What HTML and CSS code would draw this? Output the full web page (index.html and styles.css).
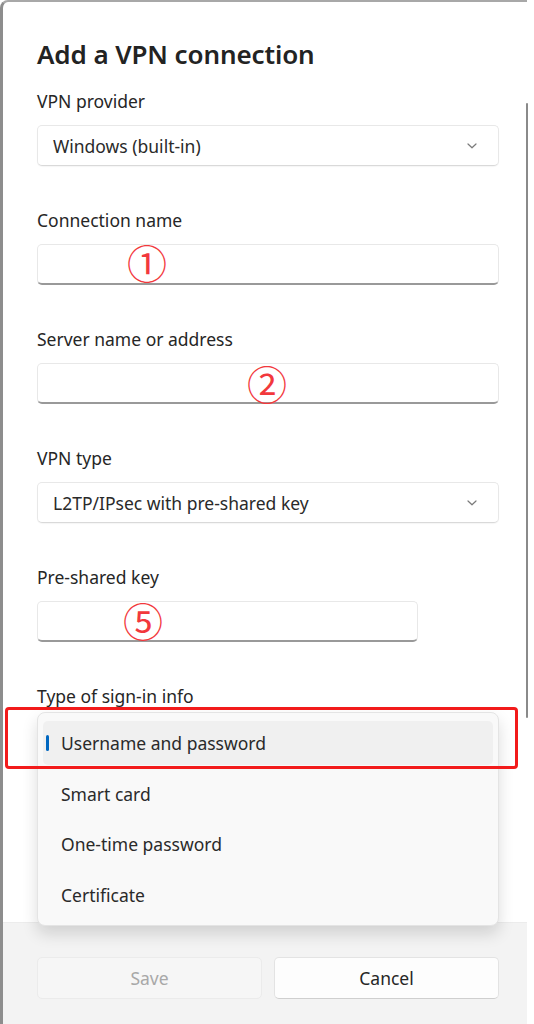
FILE: index.html
```html
<!DOCTYPE html>
<html lang="en">
<head>
<meta charset="utf-8">
<title>Add a VPN connection</title>
<link rel="stylesheet" href="styles.css">
</head>
<body>
<div class="window">
  <div class="scrollbar"></div>
  <main class="content">
    <h1 class="title">Add a VPN connection</h1>

    <div class="field">
      <div class="label">VPN provider</div>
      <div class="select">
        <span>Windows (built-in)</span>
        <svg class="chev" width="12" height="8" viewBox="0 0 12 8"><path d="M2 2 L6 5.8 L10 2" fill="none" stroke="#7a7a7a" stroke-width="1.2" stroke-linecap="round" stroke-linejoin="round"/></svg>
      </div>
    </div>

    <div class="field">
      <div class="label">Connection name</div>
      <div class="input"><span class="mark m1">①</span></div>
    </div>

    <div class="field">
      <div class="label">Server name or address</div>
      <div class="input"><span class="mark m2">②</span></div>
    </div>

    <div class="field">
      <div class="label">VPN type</div>
      <div class="select">
        <span>L2TP/IPsec with pre-shared key</span>
        <svg class="chev" width="12" height="8" viewBox="0 0 12 8"><path d="M2 2 L6 5.8 L10 2" fill="none" stroke="#7a7a7a" stroke-width="1.2" stroke-linecap="round" stroke-linejoin="round"/></svg>
      </div>
    </div>

    <div class="field">
      <div class="label">Pre-shared key</div>
      <div class="input short"><span class="mark m5">⑤</span></div>
    </div>

    <div class="field signin">
      <div class="label">Type of sign-in info</div>
      <div class="menu">
        <div class="item selected"><span class="indicator"></span>Username and password</div>
        <div class="item">Smart card</div>
        <div class="item">One-time password</div>
        <div class="item">Certificate</div>
      </div>
    </div>
  </main>
  <footer class="footer">
    <button class="btn disabled">Save</button>
    <button class="btn">Cancel</button>
  </footer>
</div>
<div class="highlight"></div>
</body>
</html>
```

FILE: styles.css
```css
html, body {
  margin: 0;
  padding: 0;
  background: #ffffff;
}
body {
  width: 534px;
  height: 1024px;
  overflow: hidden;
  position: relative;
  font-family: "Noto Sans", "Open Sans", sans-serif;
  color: #1b1b1b;
}
.window {
  position: relative;
  width: 524px;
  height: 1022px;
  border-left: 3px solid #8d8d8d;
  border-top: 2px solid #a8a8a8;
  border-top-left-radius: 8px;
  display: flex;
  flex-direction: column;
  background: #ffffff;
}
.scrollbar {
  position: absolute;
  left: 523px;
  top: 101px;
  width: 2px;
  height: 615px;
  border-radius: 1px;
  background: #8a8a8a;
}
.content {
  flex: 1;
  padding: 36px 0 0 34px;
  display: flex;
  flex-direction: column;
  gap: 43px;
}
.title {
  margin: 0 0 -23px 0;
  font-size: 26px;
  line-height: 32px;
  font-weight: 600;
  color: #232323;
  letter-spacing: -0.1px;
}
.field {
  display: flex;
  flex-direction: column;
  gap: 13px;
  position: relative;
}
.label {
  font-size: 17.5px;
  line-height: 22px;
  color: #262626;
}
.select, .input {
  box-sizing: border-box;
  width: 462px;
  height: 41px;
  background: #ffffff;
  border: 1px solid #e8e8e8;
  border-radius: 5px;
  position: relative;
}
.select {
  display: flex;
  align-items: center;
  justify-content: space-between;
  padding: 0 20px 0 15px;
  font-size: 17.5px;
  color: #2a2a2a;
  border-bottom-color: #d9d9d9;
  box-shadow: 0 1px 1px rgba(0,0,0,0.04);
}
.input {
  border-bottom: 2px solid #999999;
}
.input.short {
  width: 381px;
}
.mark {
  position: absolute;
  font-family: "Noto Sans CJK SC", "Noto Sans", sans-serif;
  font-size: 40px;
  line-height: 40px;
  color: #f2383c;
}
.m1 { left: 89px; top: -3px; }
.m2 { left: 209px; top: -1px; }
.m5 { left: 85px; top: -2px; }

.menu {
  position: absolute;
  left: 0;
  top: 27px;
  box-sizing: border-box;
  width: 462px;
  height: 214px;
  background: #f9f9f9;
  border: 1px solid #e4e4e4;
  border-radius: 8px;
  box-shadow: 0 8px 16px rgba(0,0,0,0.14);
  padding: 8px 5px;
  display: flex;
  flex-direction: column;
  gap: 6.5px;
  z-index: 2;
}
.item {
  position: relative;
  height: 44px;
  display: flex;
  align-items: center;
  padding-left: 18px;
  font-size: 17.5px;
  color: #2a2a2a;
  border-radius: 5px;
}
.item.selected {
  background: #f0f0f0;
}
.indicator {
  position: absolute;
  left: 3px;
  top: 14px;
  width: 3px;
  height: 16px;
  border-radius: 2px;
  background: #0067c0;
}
.footer {
  height: 102px;
  box-sizing: border-box;
  background: #f3f3f3;
  border-top: 1px solid #ececec;
  padding: 34px 0 0 34px;
  display: flex;
  gap: 12px;
}
.btn {
  box-sizing: border-box;
  width: 225px;
  height: 42px;
  border: 1px solid #e3e3e3;
  border-bottom-color: #cfcfcf;
  border-radius: 5px;
  background: #fdfdfd;
  font-family: "Noto Sans", "Open Sans", sans-serif;
  font-size: 17.5px;
  color: #262626;
}
.btn.disabled {
  background: #f6f6f6;
  border-color: #ebebeb;
  color: #a8a8a8;
}
.highlight {
  position: absolute;
  left: 5px;
  top: 707px;
  width: 507px;
  height: 56px;
  border: 3px solid #f21b1b;
  border-radius: 4px;
  z-index: 5;
}
```
